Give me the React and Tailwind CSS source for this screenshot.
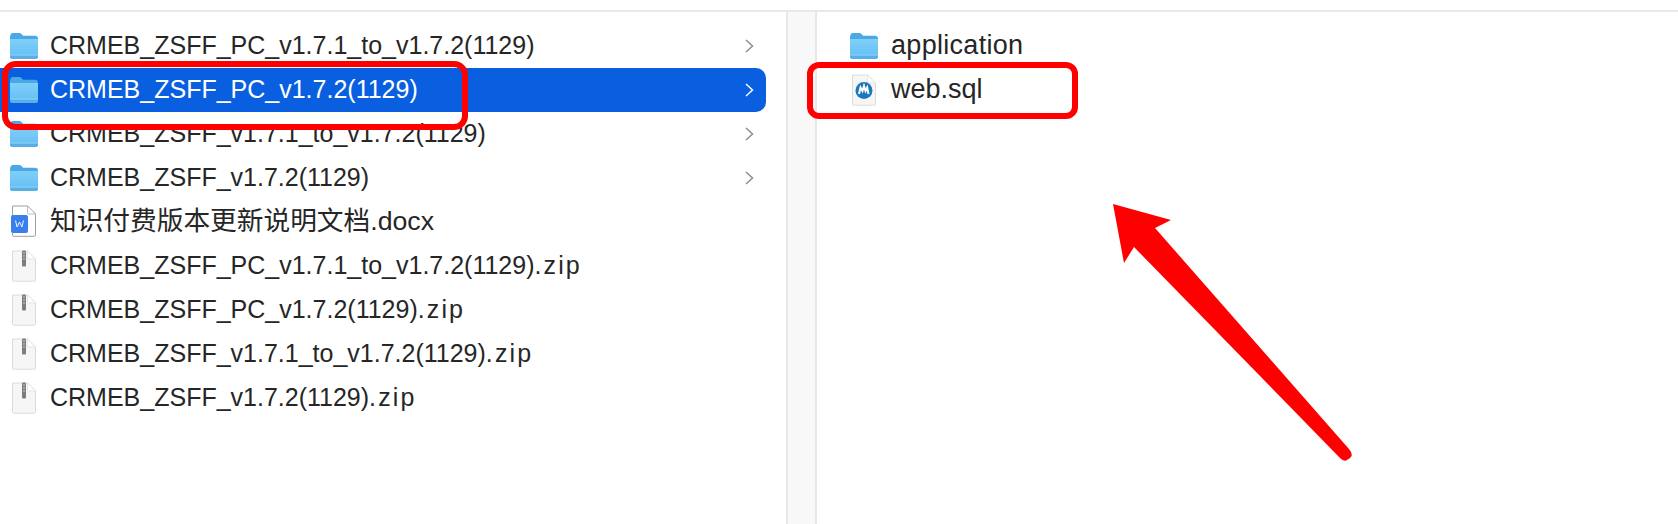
import React from "react";

const leftRows = [
  { name: "CRMEB_ZSFF_PC_v1.7.1_to_v1.7.2(1129)", icon: "folder", arrow: true },
  { name: "CRMEB_ZSFF_PC_v1.7.2(1129)", icon: "folder", arrow: true, selected: true },
  { name: "CRMEB_ZSFF_v1.7.1_to_v1.7.2(1129)", icon: "folder", arrow: true },
  { name: "CRMEB_ZSFF_v1.7.2(1129)", icon: "folder", arrow: true },
  { name: "知识付费版本更新说明文档.docx", icon: "word", cjk: true },
  { name: "CRMEB_ZSFF_PC_v1.7.1_to_v1.7.2(1129)", ext: ".zip", icon: "zip" },
  { name: "CRMEB_ZSFF_PC_v1.7.2(1129)", ext: ".zip", icon: "zip" },
  { name: "CRMEB_ZSFF_v1.7.1_to_v1.7.2(1129)", ext: ".zip", icon: "zip" },
  { name: "CRMEB_ZSFF_v1.7.2(1129)", ext: ".zip", icon: "zip" },
];

const FolderIcon = () => (
  <svg width="30" height="28" viewBox="0 0 30 28" className="shrink-0">
    <defs>
      <linearGradient id="folderBody" x1="0" y1="0" x2="0" y2="1">
        <stop offset="0" stopColor="#7fd0fa" />
        <stop offset="1" stopColor="#62bcf2" />
      </linearGradient>
    </defs>
    <path d="M1 5.500C1 3 2 1 4 1h6c1.500 0 2.200.6 3 1.600l1 1.200h12c2 0 3 1 3 3V9H1z" fill="#4aa8e6" />
    <path d="M1 7h28v17.500c0 1.600-1 2.500-2.500 2.500h-23C2 27 1 26.100 1 24.500z" fill="url(#folderBody)" />
    <path d="M1 23.500h28v1c0 1.600-1 2.500-2.500 2.500h-23C2 27 1 26.100 1 24.500z" fill="#58aee6" />
    <path d="M1 23h28" stroke="#9ad8f8" strokeWidth="0.8" />
  </svg>
);

const PageShape = ({ stroke = "#dcdcdc", fill = "#f6f6f6" }) => (
  <>
    <path d="M1.500 1h15l8 8v21c0 .8-.5 1.300-1.300 1.300H2.800c-.8 0-1.300-.5-1.300-1.300z" fill={fill} stroke={stroke} />
    <path d="M16.500 1v6.500c0 1 .5 1.500 1.500 1.500h6.500z" fill="#ffffff" stroke={stroke} strokeWidth="0.7" />
  </>
);

const WordIcon = () => (
  <svg width="26" height="32" viewBox="0 0 26 32" className="mb-[2px] shrink-0">
    <PageShape stroke="#a0a0a0" fill="#ffffff" />
    <rect x="0" y="10" width="17" height="18" rx="2" fill="#3a80ec" />
    <path d="M4.500 15.500l1.600 6.500 2.400-5 2.400 5 1.600-6.500" fill="none" stroke="#ffffff" strokeWidth="0.900" />
  </svg>
);

const ZipIcon = () => (
  <svg width="26" height="32" viewBox="0 0 26 32" className="shrink-0">
    <PageShape />
    <rect x="11" y="0.500" width="4" height="16" rx="1" fill="#7d7d7d" />
    <path d="M12 3h2M12 6h2M12 9h2" stroke="#d0d0d0" strokeWidth="1" />
  </svg>
);

const SqlIcon = () => (
  <svg width="26" height="32" viewBox="0 0 26 32" className="shrink-0">
    <PageShape />
    <circle cx="13" cy="16.500" r="8.500" fill="#1a78bd" />
    <path d="M8 20l1.500-6.500 2 3.500 1.500-5 1.500 5 1.700-3.500 1.300 6.500" fill="none" stroke="#ffffff" strokeWidth="2" />
  </svg>
);

const RowIcon = ({ type }) => {
  if (type === "word") return <WordIcon />;
  if (type === "zip") return <ZipIcon />;
  if (type === "sql") return <SqlIcon />;
  return <FolderIcon />;
};

const Chevron = ({ color }) => (
  <svg width="9" height="14" viewBox="0 0 9 14" className="shrink-0">
    <path d="M1 1l6.500 6L1 13" fill="none" stroke={color} strokeWidth="1.500" />
  </svg>
);

const Row = ({ row }) => (
  <div className={`flex h-[44px] items-center pr-[12px] ${row.selected ? "rounded-r-[10px] bg-[#0a5fe0] text-white" : "text-[#262626]"}`}>
    <div className="flex w-[50px] shrink-0 justify-center pr-[2px]">
      <RowIcon type={row.icon} />
    </div>
    <span className={`flex-1 whitespace-nowrap pb-[2px] ${row.cjk ? "text-[26.7px]" : ""}`}>
      {row.name}
      {row.ext && <span className="tracking-[2.1px]">{row.ext}</span>}
    </span>
    {row.arrow && <Chevron color={row.selected ? "#ffffff" : "#8e8e8e"} />}
  </div>
);

export default function App() {
  return (
    <div
      className="relative h-[524px] w-[1678px] overflow-hidden bg-white text-[25px] leading-none"
      style={{ fontFamily: '"Liberation Sans", "Noto Sans CJK SC", sans-serif' }}
    >
      <div className="h-[12px] border-b-2 border-[#e8e8e8]" />
      <div className="flex h-[512px]">
        <div className="w-[786px] shrink-0 pt-[12px] pr-[20px]">
          {leftRows.map((row) => (
            <Row key={row.name + (row.ext || "")} row={row} />
          ))}
        </div>
        <div className="w-[31px] shrink-0 border-x-2 border-[#e8e8e8] bg-[#f8f8f8]" />
        <div className="flex-1 pt-[12px] text-[27px] text-[#262626]">
          <div className="flex h-[44px] items-center">
            <div className="flex w-[74px] shrink-0 justify-center pl-[20px]">
              <FolderIcon />
            </div>
            <span className="pb-[2px] tracking-[0.3px]">application</span>
          </div>
          <div className="flex h-[44px] items-center">
            <div className="flex w-[74px] shrink-0 justify-center pl-[20px]">
              <SqlIcon />
            </div>
            <span className="pb-[2px]">web.sql</span>
          </div>
        </div>
      </div>

      {/* annotations on top of the screenshot */}
      <div className="absolute left-[2px] top-[61px] h-[69px] w-[466px] rounded-[14px] border-[6px] border-[#ff0000]" />
      <div className="absolute left-[807px] top-[62px] h-[57px] w-[271px] rounded-[12px] border-[6px] border-[#ff0000]" />
      <svg className="absolute left-[1100px] top-[190px]" width="270" height="290" viewBox="1100 190 270 290">
        <path
          d="M1113 204L1171 220L1155 228L1349 449Q1354 455 1350 458L1347 460Q1344 462 1340 458L1134 247L1124 263Z"
          fill="#ff0000"
        />
      </svg>
    </div>
  );
}
